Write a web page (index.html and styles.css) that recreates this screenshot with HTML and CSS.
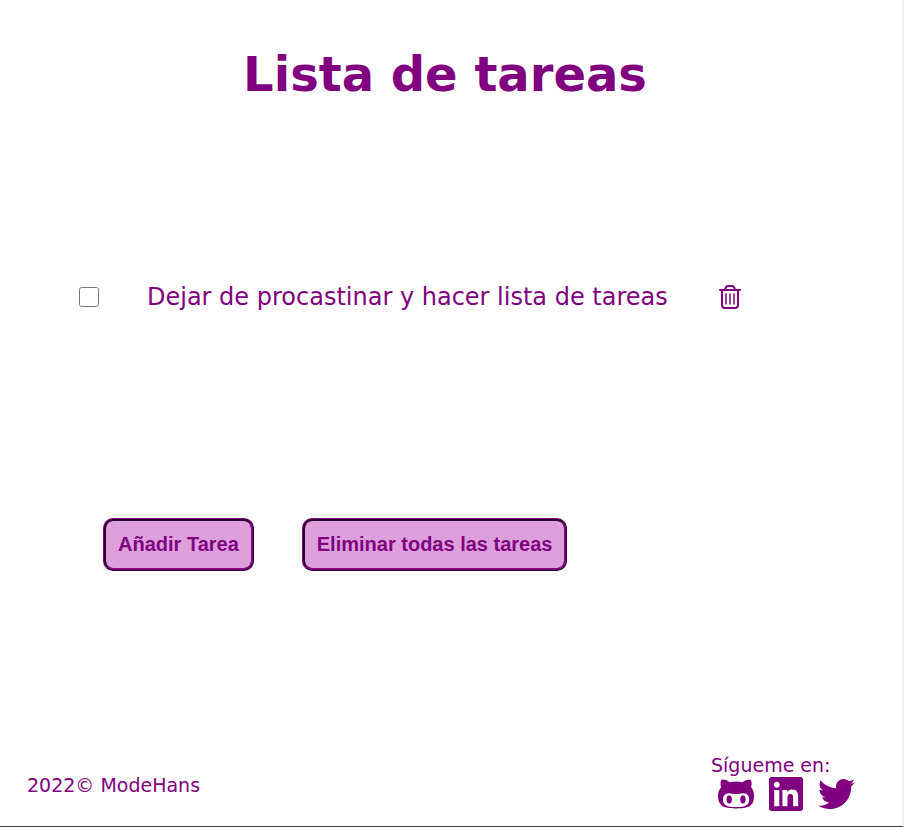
FILE: index.html
```html
<!DOCTYPE html>
<html lang="es">
<head>
  <meta charset="utf-8">
  <title>Lista de tareas</title>
  <link rel="stylesheet" href="styles.css">
</head>
<body>
  <header class="header">
    <h1 class="title">Lista de tareas</h1>
  </header>
  <main class="main">
    <ul class="tasks">
      <li class="task">
        <input class="task-check" type="checkbox" id="task-1">
        <label class="task-label" for="task-1">Dejar de procastinar y hacer lista de tareas</label>
        <button class="task-delete" type="button" aria-label="Eliminar tarea">
          <svg width="22" height="25" viewBox="0 0 22 25" fill="none" stroke="currentColor" stroke-width="2">
            <path d="M1 5h20" stroke-linecap="round"/>
            <path d="M6 5q.5-4 3.500-4h3q3 0 3.500 4"/>
            <path d="M3 5v15q0 3 3 3h10q3 0 3-3V5"/>
            <path d="M7 9v10M11 9v10M15 9v10" stroke-width="1.500" stroke-linecap="round"/>
          </svg>
        </button>
      </li>
    </ul>
    <div class="actions">
      <button class="action" type="button">Añadir Tarea</button>
      <button class="action" type="button">Eliminar todas las tareas</button>
    </div>
  </main>
  <footer class="footer">
    <p class="copyright">2022© ModeHans</p>
    <div class="social">
      <p class="follow">Sígueme en:</p>
      <nav class="links">
        <a href="#github" aria-label="GitHub">
          <svg width="36" height="34" viewBox="0 32 480 448" fill="currentColor"><path d="M186.100 328.700c0 20.900-10.900 55.100-36.700 55.100s-36.700-34.200-36.700-55.100 10.900-55.100 36.700-55.100 36.700 34.200 36.700 55.100zM480 278.200c0 31.900-3.200 65.700-17.500 95-37.900 76.600-142.100 74.800-216.700 74.800-75.800 0-186.200 2.700-225.600-74.800-14.600-29-20.200-63.100-20.200-95 0-41.900 13.900-81.500 41.500-113.600-5.200-15.800-7.700-32.400-7.700-48.800 0-21.500 4.900-32.300 14.600-51.800 45.300 0 74.300 9 108.800 36 29-6.900 58.800-10 88.700-10 27 0 54.200 2.900 80.400 9.200 34-26.700 63-35.200 107.800-35.200 9.800 19.500 14.600 30.300 14.600 51.800 0 16.400-2.600 32.700-7.700 48.200 27.500 32.400 39 72.300 39 114.200zm-64.300 50.500c0-43.900-26.700-82.600-73.500-82.600-18.900 0-37 3.400-56 6-14.900 2.300-29.800 3.200-45.100 3.200-15.200 0-30.100-.9-45.100-3.200-18.700-2.600-37-6-56-6-46.800 0-73.500 38.700-73.500 82.600 0 87.800 80.400 101.300 150.400 101.300h48.200c70.300 0 150.600-13.400 150.600-101.300zm-82.600-55.100c-25.800 0-36.700 34.200-36.700 55.100s10.900 55.100 36.700 55.100 36.700-34.200 36.700-55.100-10.900-55.100-36.700-55.100z"/></svg>
        </a>
        <a href="#linkedin" aria-label="LinkedIn">
          <svg width="34" height="34" viewBox="0 32 448 448" fill="currentColor"><path d="M416 32H31.900C14.300 32 0 46.500 0 64.300v383.400C0 465.500 14.300 480 31.900 480H416c17.600 0 32-14.500 32-32.300V64.300c0-17.800-14.400-32.300-32-32.300zM135.400 416H69V202.200h66.500V416zm-33.200-243c-21.300 0-38.500-17.300-38.500-38.500S80.900 96 102.200 96c21.200 0 38.500 17.300 38.500 38.500 0 21.300-17.200 38.500-38.500 38.500zm282.100 243h-66.400V312c0-24.800-.5-56.700-34.500-56.700-34.600 0-39.900 27-39.900 54.900V416h-66.400V202.200h63.700v29.200h.9c8.900-16.800 30.600-34.500 62.900-34.500 67.200 0 79.700 44.300 79.700 101.900V416z"/></svg>
        </a>
        <a href="#twitter" aria-label="Twitter">
          <svg width="37" height="34" viewBox="0 21 512 470" fill="currentColor"><path d="M459.370 151.716c.325 4.548.325 9.097.325 13.645 0 138.720-105.583 298.558-298.558 298.558-59.452 0-114.680-17.219-161.137-47.106 8.447.974 16.568 1.299 25.340 1.299 49.055 0 94.213-16.568 130.274-44.832-46.132-.975-84.792-31.188-98.112-72.772 6.498.974 12.995 1.624 19.818 1.624 9.421 0 18.843-1.300 27.614-3.573-48.081-9.747-84.143-51.980-84.143-102.985v-1.299c13.969 7.797 30.214 12.670 47.431 13.319-28.264-18.843-46.781-51.005-46.781-87.391 0-19.492 5.197-37.360 14.294-52.954 51.655 63.675 129.300 105.258 216.365 109.807-1.624-7.797-2.599-15.918-2.599-24.040 0-57.828 46.782-104.934 104.934-104.934 30.213 0 57.502 12.670 76.670 33.137 23.715-4.548 46.456-13.320 66.599-25.340-7.798 24.366-24.366 44.833-46.132 57.827 21.117-2.273 41.584-8.122 60.426-16.243-14.292 20.791-32.161 39.308-52.628 54.253z"/></svg>
        </a>
      </nav>
    </div>
  </footer>
</body>
</html>
```
FILE: styles.css
```css
* {
  box-sizing: border-box;
}

body {
  margin: 0;
  min-height: 100vh;
  display: flex;
  flex-direction: column;
  font-family: Verdana, "DejaVu Sans", sans-serif;
  color: purple;
  background: #fff;
  border-right: 2px solid #f0f0f0;
  border-bottom: 1px solid #4a3833;
}

h1, p, ul {
  margin: 0;
  padding: 0;
}

.header {
  padding: 44px 12px 0 0;
  text-align: center;
}

.title {
  font-size: 48px;
  line-height: 60px;
}

.main {
  flex: 1;
  padding: 176px 48px 0 79px;
}

.tasks {
  list-style: none;
}

.task {
  display: flex;
  align-items: center;
  gap: 48px;
  font-size: 24px;
  line-height: 34px;
}

.task-check {
  width: 20px;
  height: 20px;
  margin: 0;
}

.task-label {
  flex: 0 1 524px;
}

.task-delete {
  display: flex;
  padding: 0;
  border: 0;
  background: none;
  color: inherit;
  cursor: pointer;
}

.actions {
  display: flex;
  gap: 48px;
  margin-top: 204px;
  padding-left: 24px;
}

.action {
  padding: 12px;
  border: 3px ridge purple;
  border-radius: 10px;
  background: plum;
  color: purple;
  font: bold 20px/23px "Liberation Sans", Arial, sans-serif;
  cursor: pointer;
}

.footer {
  display: flex;
  justify-content: space-between;
  align-items: flex-end;
  padding: 0 47px 15px 27px;
  font-size: 19px;
  line-height: 24px;
}

.copyright {
  padding-bottom: 14px;
}

.links {
  display: flex;
  gap: 15px;
  padding-left: 7px;
}

.links a {
  display: flex;
  color: inherit;
}
```
